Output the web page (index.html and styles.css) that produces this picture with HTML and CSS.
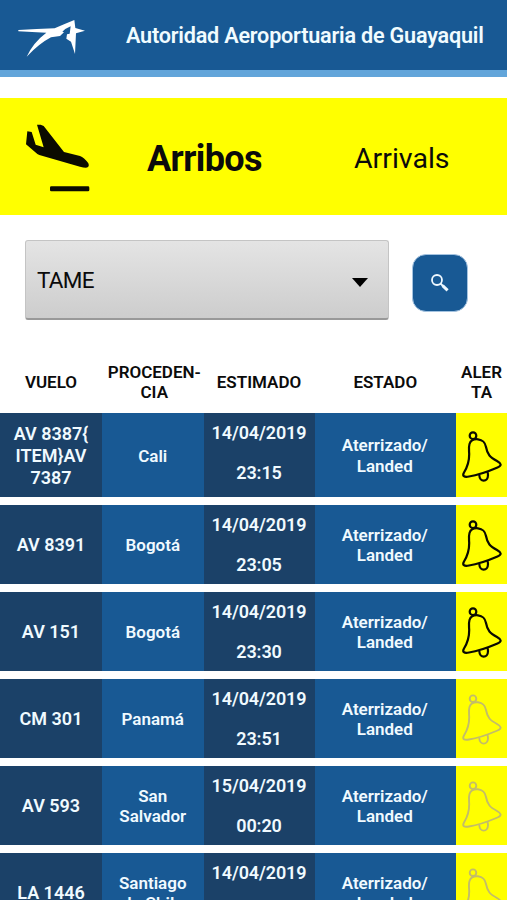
FILE: index.html
```
<!DOCTYPE html>
<html lang="es">
<head>
  <meta charset="UTF-8">
  <meta name="viewport" content="width=device-width, initial-scale=1.0">
  <title>Autoridad Aeroportuaria de Guayaquil</title>
  <link rel="stylesheet" href="styles.css">
</head>
<body>
  <header class="topbar">
    <svg class="logo" viewBox="50 56 207 117">
      <path d="M54 89 Q110 86 163 84 Q190 72 222 59 L225 83 L254 91 L227 99 L224 161 L212 124 L198 115 L200 102 L208 100 L211 78 Q196 84 186 94 L191 96 L179 107 L152 111 Q116 130 79 169 Q99 126 138 97 Q95 95 54 93 Z"/>
    </svg>
    <h1>Autoridad Aeroportuaria de Guayaquil</h1>
  </header>

  <section class="banner">
    <svg class="plane" viewBox="75 85 195 210">
      <path d="M111 90 L122 90 L131 94 L192 172 L240 184 Q252 188 265 206 Q270 218 258 219 Q250 219 240 216 L118 181 Q112 179 106 173 L78 149 L82 110 L95 112 L107 150 L131 158 Z"/>
      <rect x="150" y="275" width="118" height="15" rx="4"/>
    </svg>
    <h2>Arribos</h2>
    <span class="sub">Arrivals</span>
  </section>

  <div class="search">
    <div class="select"><span>TAME</span><i class="caret"></i></div>
    <button class="btn" type="button" aria-label="Buscar">
      <svg viewBox="0 0 20 20">
        <circle cx="7" cy="7" r="5"/>
        <path class="thin" d="M10.5 10.5 L13 13"/>
        <path class="handle" d="M12.6 12.6 L17.6 17.4"/>
      </svg>
    </button>
  </div>

  <svg width="0" height="0" class="defs">
    <symbol id="bell" viewBox="0 0 51 60">
      <circle cx="17" cy="10.7" r="3.3"/>
      <path d="M13.5 19 C15 14.5 19 14 22 14.3 C27 15 29 17 30 22 C31.5 30 34 32 41 36 C45.5 38.5 46 40.5 41.5 42.5 C31 47 23 50 13 51.5 C8 52.5 6 51 8 47.5 C12 41 13.3 37 13.2 29 C13 25 12.5 22 13.5 19 Z"/>
      <path d="M23.3 50 C23.5 57.5 32 57.5 32 50 C32 48.5 31.8 47.8 31.3 47"/>
    </symbol>
  </svg>

  <main class="flights">
    <div class="row head">
      <div>VUELO</div><div class="wide">PROCEDEN-<br>CIA</div><div>ESTIMADO</div><div>ESTADO</div><div>ALER<br>TA</div>
    </div>
    <div class="row first">
      <div class="vuelo">AV 8387{<br>ITEM}AV<br>7387</div>
      <div class="proc">Cali</div>
      <div class="hora"><span>14/04/2019</span><span>23:15</span></div>
      <div class="estado">Aterrizado/<br>Landed</div>
      <div class="alerta"><svg class="bell"><use href="#bell"/></svg></div>
    </div>
    <div class="row">
      <div class="vuelo">AV 8391</div>
      <div class="proc">Bogotá</div>
      <div class="hora"><span>14/04/2019</span><span>23:05</span></div>
      <div class="estado">Aterrizado/<br>Landed</div>
      <div class="alerta"><svg class="bell"><use href="#bell"/></svg></div>
    </div>
    <div class="row">
      <div class="vuelo">AV 151</div>
      <div class="proc">Bogotá</div>
      <div class="hora"><span>14/04/2019</span><span>23:30</span></div>
      <div class="estado">Aterrizado/<br>Landed</div>
      <div class="alerta"><svg class="bell"><use href="#bell"/></svg></div>
    </div>
    <div class="row">
      <div class="vuelo">CM 301</div>
      <div class="proc">Panamá</div>
      <div class="hora"><span>14/04/2019</span><span>23:51</span></div>
      <div class="estado">Aterrizado/<br>Landed</div>
      <div class="alerta"><svg class="bell off"><use href="#bell"/></svg></div>
    </div>
    <div class="row">
      <div class="vuelo">AV 593</div>
      <div class="proc">San<br>Salvador</div>
      <div class="hora"><span>15/04/2019</span><span>00:20</span></div>
      <div class="estado">Aterrizado/<br>Landed</div>
      <div class="alerta"><svg class="bell off"><use href="#bell"/></svg></div>
    </div>
    <div class="row">
      <div class="vuelo">LA 1446</div>
      <div class="proc">Santiago<br>de Chile</div>
      <div class="hora"><span>14/04/2019</span></div>
      <div class="estado">Aterrizado/<br>Landed</div>
      <div class="alerta"><svg class="bell off"><use href="#bell"/></svg></div>
    </div>
  </main>
</body>
</html>
```
FILE: styles.css
```
:root {--blue: #185994; --navy: #1b4168; --yellow: #ffff00;}
* {box-sizing: border-box;}
body {margin: 0; height: 900px; overflow: hidden; background: #fff; color: #0b0b0b; font-family: Roboto, "Liberation Sans", sans-serif;}

.topbar {display: flex; align-items: flex-start; height: 77px; padding: 19px 0 0 17px; background: var(--blue); border-bottom: 7px solid #62a5da;}
.logo {width: 69px; height: 39px; fill: #fff;}
.topbar h1 {margin: 3px 0 0 40px; color: #f1fcff; font-size: 21.6px; line-height: 28px; font-weight: 600; letter-spacing: -0.2px; white-space: nowrap;}

.banner {display: flex; height: 117px; margin-top: 21px; padding-left: 25px; background: var(--yellow);}
.plane {width: 65px; height: 70px; margin-top: 25px; fill: #0b0b00;}
.banner h2 {width: 115px; margin: 39px 0 0 57px; font-size: 36px; line-height: 44px; font-weight: 700; letter-spacing: -0.6px; white-space: nowrap;}
.sub {margin: 42px 0 0 92px; font-size: 28.5px; line-height: 38px;}

.search {display: flex; align-items: center; height: 80px; margin-top: 25px; padding-left: 25px;}
.select {display: flex; align-items: center; justify-content: space-between; width: 364px; height: 80px; padding: 0 20px 0 11px; font-size: 22.5px; letter-spacing: -0.7px; background: linear-gradient(#e4e4e4, #cdcdcd); border: 1px solid #c4c4c4; border-bottom: 2px solid #999; border-radius: 3px;}
.caret {margin-top: 5px; border: 8.5px solid transparent; border-top: 9px solid #000; border-bottom: 0;}
.btn {width: 56px; height: 58px; margin: 5px 0 0 23px; padding: 0; background: var(--blue); border: 1px solid #a4c3e0; border-radius: 14px;}
.btn svg {display: block; width: 20px; height: 20px; margin: 0 auto; fill: none; stroke: #eef8ff; stroke-width: 1.8;}
.btn .handle {stroke-width: 3;}

.defs {position: absolute;}
.flights {display: grid; row-gap: 7.5px; margin-top: 40px;}
.row {display: grid; grid-template-columns: 102px 101.5px 111px 141.5px 51px; height: 79.5px; font-size: 17px; line-height: 20.5px; font-weight: 600; text-align: center; white-space: nowrap;}
.row > div {display: flex; align-items: center; justify-content: center; color: #f0faff;}
.row.first {height: 84.5px;}
.row.head {height: 45px; padding-bottom: 1px;}
.row.head > div {color: #0b0b0b;}
.row.head .wide {padding-left: 3px;}
.row .vuelo {padding-top: 2px; font-size: 18px; line-height: 22px; background: var(--navy);}
.row .proc, .row .estado {padding-top: 2px; background: var(--blue);}
.row .estado {padding-right: 1px;}
.row .hora {flex-direction: column; justify-content: flex-start; gap: 20px; padding-top: 10px; font-size: 18px; line-height: 20px; letter-spacing: -0.1px; background: var(--navy);}
.row .alerta {background: var(--yellow);}
.bell {width: 51px; height: 60px; fill: none; stroke: #0b0b00; stroke-width: 2.2;}
.bell.off {stroke: #c3bd68; stroke-width: 1.9;}
```
